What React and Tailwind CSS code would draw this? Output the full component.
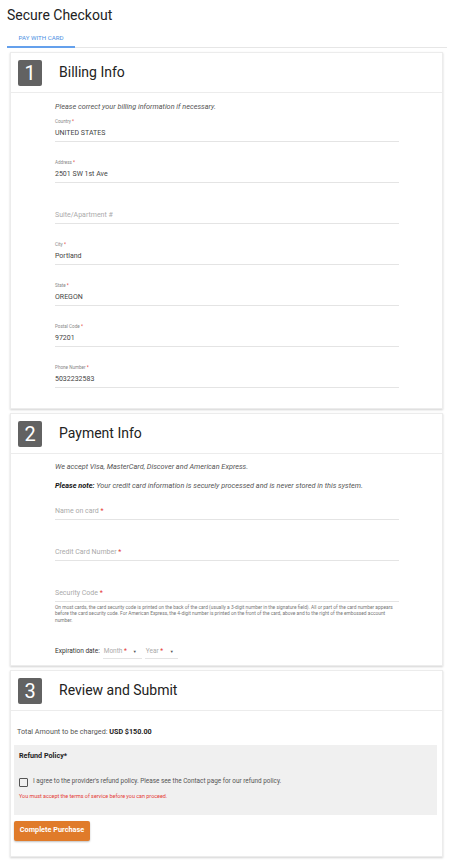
const font = { fontFamily: "Roboto, 'Liberation Sans', sans-serif" };

// billing fields
const billing = [
  { label: "Country", value: "UNITED STATES", req: true },
  { label: "Address", value: "2501 SW 1st Ave", req: true },
  { label: "Suite/Apartment #", value: "", req: false },
  { label: "City", value: "Portland", req: true },
  { label: "State", value: "OREGON", req: true },
  { label: "Postal Code", value: "97201", req: true },
  { label: "Phone Number", value: "5032232583", req: true },
];

const Field = ({ label, value, req, last }) => (
  <div className={last ? "" : "mb-[17px]"}>
    <div className="h-[8px] text-[4.6px] leading-[8px] text-[#888]">
      {value ? (
        <>
          {label}
          {req && <span className="text-[#e53935]"> *</span>}
        </>
      ) : null}
    </div>
    <div className="h-[16px] border-b border-[#e4e4e4] flex items-center">
      {value ? (
        <span className="text-[7px] text-[#444]">{value}</span>
      ) : (
        <span className="text-[7px] text-[#aaa]">
          {label}
          {req && <span className="text-[#e53935]"> *</span>}
        </span>
      )}
    </div>
  </div>
);

const Header = ({ n, title }) => (
  <div className="h-[40px] flex items-center border-b border-[#ececec] px-[7px]">
    <div className="w-[24px] h-[26px] rounded-[2px] bg-[#626262] text-white text-[20px] leading-[26px] text-center">
      {n}
    </div>
    <div className="ml-[17px] text-[14px] text-[#222]">{title}</div>
  </div>
);

const Card = ({ children, className }) => (
  <div className={"bg-white border border-[#ececec] shadow-[0_1px_2px_rgba(0,0,0,0.18)] " + (className || "")}>
    {children}
  </div>
);

export default function App() {
  return (
    <div className="bg-white min-h-[864px] w-[450px]" style={font}>
      {/* title */}
      <div className="pl-[7px] pt-[5px] text-[14px] leading-[20px] text-[#222]">Secure Checkout</div>
      {/* tabs */}
      <div className="ml-[7px] mr-[3px] mt-[6px] border-b border-[#e6e6e6] flex">
        <div className="w-[68px] h-[17px] border-b-2 border-[#64a0ec] text-[6.2px] text-[#4a90e2] text-center leading-[14px] -mb-[1px]">
          PAY WITH CARD
        </div>
      </div>

      <div className="mx-[10px] mt-[4px] w-[433px] flex flex-col gap-[4px]">
        {/* billing */}
        <Card>
          <Header n="1" title="Billing Info" />
          <div className="pl-[44px] pr-[43px] pt-[9px] pb-[20px]">
            <div className="text-[7.3px] leading-[10px] italic text-[#555] mb-[6px]">
              Please correct your billing information if necessary.
            </div>
            {billing.map((f, i) => (
              <Field key={i} {...f} last={i === billing.length - 1} />
            ))}
          </div>
        </Card>

        {/* payment */}
        <Card>
          <Header n="2" title="Payment Info" />
          <div className="pl-[44px] pr-[43px] pt-[8px] pb-[5px]">
            <div className="text-[7.3px] leading-[10px] italic text-[#555]">
              We accept Visa, MasterCard, Discover and American Express.
            </div>
            <div className="mt-[9px] mb-[5px] text-[7.3px] leading-[10px] italic text-[#555]">
              <span className="font-bold text-[#111]">Please note:</span> Your credit card information is securely processed and is never stored in this system.
            </div>
            <Field label="Name on card" value="" req />
            <Field label="Credit Card Number" value="" req />
            <Field label="Security Code" value="" req last />
            <div className="mt-[3px] text-[4.85px] leading-[6.4px] text-[#777]">
              On most cards, the card security code is printed on the back of the card (usually a 3-digit number in the signature field). All or part of the card number appears before the card security code. For American Express, the 4-digit number is printed on the front of the card, above and to the right of the embossed account number.
            </div>
            <div className="mt-[20px] flex items-center h-[16px]">
              <span className="text-[6.5px] text-[#333]">Expiration date:</span>
              <div className="ml-[3px] w-[39px] h-[14px] border-b border-[#e4e4e4] flex items-center justify-between pr-[5px] pl-[1px]">
                <span className="text-[6.5px] text-[#aaa]">
                  Month <span className="text-[#e53935]">*</span>
                </span>
                <span className="text-[4px] text-[#555]">▼</span>
              </div>
              <div className="ml-[3px] w-[33px] h-[14px] border-b border-[#e4e4e4] flex items-center justify-between pr-[4px] pl-[1px]">
                <span className="text-[6.5px] text-[#aaa]">
                  Year <span className="text-[#e53935]">*</span>
                </span>
                <span className="text-[4px] text-[#555]">▼</span>
              </div>
            </div>
          </div>
        </Card>

        {/* review */}
        <Card>
          <Header n="3" title="Review and Submit" />
          <div className="px-[3px] pt-[16px] pb-[15px]">
            <div className="pl-[3px] text-[7.2px] leading-[10px] text-[#555]">
              Total Amount to be charged: <span className="font-bold text-[#222]">USD $150.00</span>
            </div>
            <div className="mt-[8px] mr-[2px] bg-[#f0f0f0] h-[70px] px-[5px] pt-[7px]">
              <div className="text-[7.2px] font-bold text-[#222] leading-[8px]">Refund Policy*</div>
              <div className="mt-[17px] flex items-center">
                <div className="w-[9px] h-[9px] border border-[#555] rounded-[1px]" />
                <span className="ml-[5px] text-[6.4px] text-[#555]">
                  I agree to the provider's refund policy. Please see the Contact page for our refund policy.
                </span>
              </div>
              <div className="mt-[5px] text-[5.4px] text-[#e53935]">
                You must accept the terms of service before you can proceed.
              </div>
            </div>
            <button className="mt-[5px] w-[76px] h-[20px] bg-[#e07b2a] rounded-[2px] text-white text-[7.3px] font-bold shadow-[0_1px_2px_rgba(0,0,0,0.25)]">
              Complete Purchase
            </button>
          </div>
        </Card>
      </div>
    </div>
  );
}
